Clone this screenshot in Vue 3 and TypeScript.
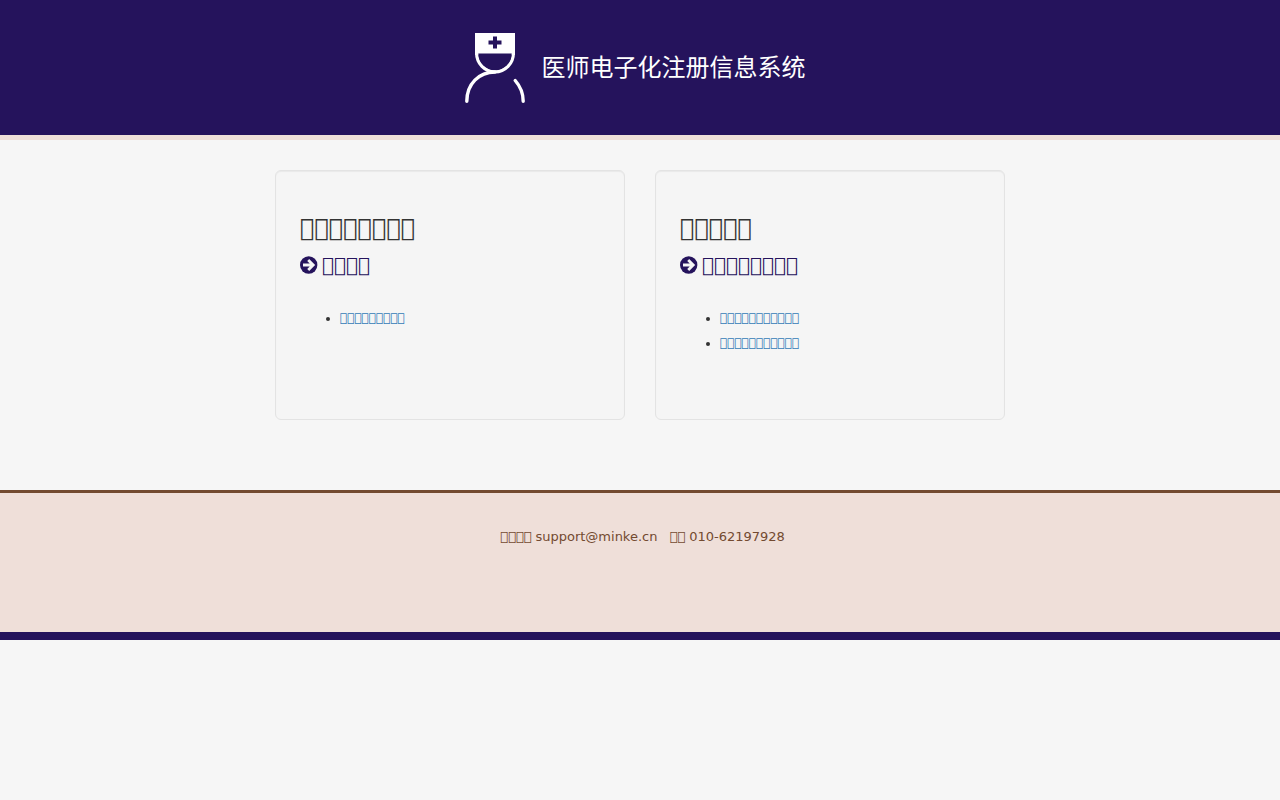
<script setup lang="ts">
interface Card {
  heading: string
  action: string
  links: string[]
}

// Private-use code point, drawn by the font as its missing-glyph box.
const box = (count: number): string => '\uE9A0'.repeat(count)

const cards: Card[] = [
  { heading: box(8), action: box(4), links: [box(9)] },
  { heading: box(5), action: box(8), links: [box(11), box(11)] },
]
</script>

<template>
  <div class="page">
    <header class="banner">
      <svg class="logo" viewBox="0 0 60 72" fill="none" aria-hidden="true">
        <path d="M10 1H50V23H10Z" fill="#fff" />
        <path d="M11.7 21A18.3 18.8 0 0 0 48.3 21" stroke="#fff" stroke-width="3.4" />
        <path d="M13.3 21.5H46.7A16.7 16.7 0 0 1 13.3 21.5Z" fill="#25135c" />
        <path d="M30 4.5V16.5M23.5 10.5H36.5" stroke="#25135c" stroke-width="4" />
        <path d="M1.8 69.3C1.8 52 14 40 30 40" stroke="#fff" stroke-width="3.4" stroke-linecap="round" />
        <path d="M50.2 48.5C55 54 58.2 61 58.2 69.3" stroke="#fff" stroke-width="3.4" stroke-linecap="round" />
      </svg>
      <h1 class="title">医师电子化注册信息系统</h1>
    </header>

    <main class="cards">
      <section v-for="(card, index) in cards" :key="index" class="card">
        <h2 class="heading">{{ card.heading }}</h2>
        <h3 class="action">
          <svg class="arrow" viewBox="0 0 18 18" aria-hidden="true">
            <circle cx="8.7" cy="9" r="8.7" fill="#25135c" />
            <path d="M3 9H12M8.2 4L13.2 9L8.2 14" fill="none" stroke="#f5f5f5" stroke-width="2.8" />
          </svg>
          <span>{{ card.action }}</span>
        </h3>
        <ul class="links">
          <li v-for="(link, i) in card.links" :key="i">
            <a href="#">{{ link }}</a>
          </li>
        </ul>
      </section>
    </main>

    <footer class="footer">
      <p class="contact">
        <span>{{ box(4) }} support@minke.cn</span>
        <span>{{ box(2) }} 010-62197928</span>
      </p>
    </footer>
  </div>
</template>

<style>
body {
  background: #f6f6f6;
}
</style>

<style scoped>
.page {
  color: #333;
  font-family: "DejaVu Sans", sans-serif;
  font-size: 13px;
}

.banner {
  display: flex;
  justify-content: center;
  box-sizing: border-box;
  min-height: 140px;
  padding: 32px 10px 0 0;
  background: #25135c;
  border-bottom: 5px solid #efdfd9;
}

.logo {
  width: 60px;
  height: 72px;
}

.title {
  margin: 16px 0 0 17px;
  color: #fff;
  font-family: "Noto Sans CJK SC", sans-serif;
  font-size: 24px;
  font-weight: 400;
  line-height: 36px;
}

.cards {
  display: grid;
  grid-template-columns: repeat(2, minmax(0, 350px));
  justify-content: center;
  gap: 30px;
  padding: 30px 20px 70px;
}

.card {
  box-sizing: border-box;
  min-height: 250px;
  padding: 44px 24px 24px;
  background: #f5f5f5;
  border: 1px solid #e3e3e3;
  border-radius: 6px;
  box-shadow: inset 0 1px 1px rgba(0, 0, 0, 0.05);
}

.heading {
  margin: 0;
  font-size: 24px;
  font-weight: 400;
  line-height: 26px;
}

.action {
  display: flex;
  align-items: center;
  gap: 4px;
  margin: 12px 0 0;
  color: #25135c;
  font-size: 20px;
  font-weight: 400;
  line-height: 24px;
}

.arrow {
  width: 18px;
  height: 18px;
}

.links {
  margin: 29px 0 0;
  padding-left: 40px;
  font-size: 12px;
  line-height: 25px;
}

.links a {
  color: #337ab7;
  text-decoration: none;
}

.footer {
  box-sizing: border-box;
  min-height: 150px;
  padding: 34px 0 0 5px;
  background: #efdfd9;
  border-top: 3px solid #734a30;
  border-bottom: 8px solid #25135c;
}

.contact {
  display: flex;
  justify-content: center;
  gap: 12px;
  margin: 0;
  color: #734a30;
  line-height: 20px;
}
</style>
